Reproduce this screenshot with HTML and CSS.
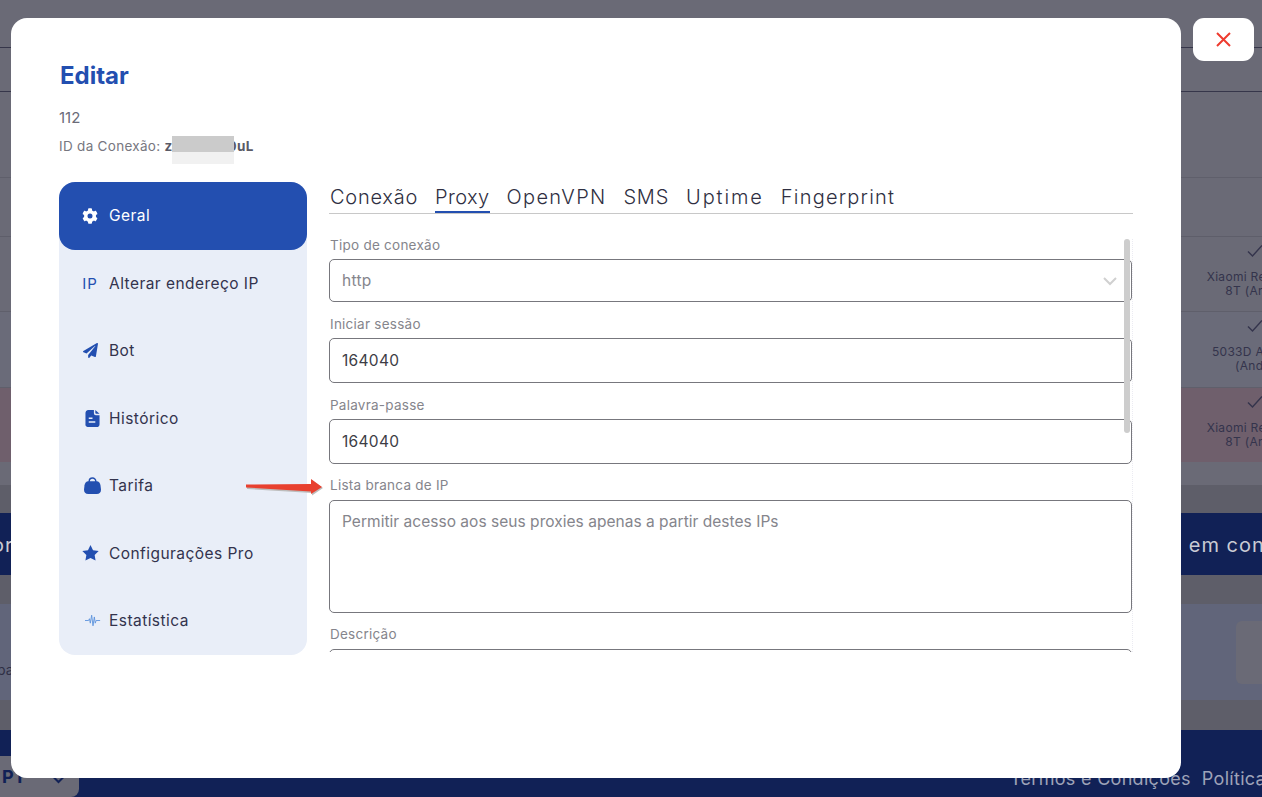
FILE: index.html
```html
<!DOCTYPE html>
<html lang="pt">
<head>
<meta charset="utf-8">
<title>Editar</title>
<link rel="stylesheet" href="styles.css">
</head>
<body>
<div class="page">
  <div class="row r1"></div>
  <div class="row r2"></div>
  <div class="row r3"></div>
  <div class="row r4"></div>
  <div class="row r5"><div class="device"><svg class="tick" viewBox="0 0 16 14"><path d="M1 7.500l4.500 4.500L15 1.500" fill="none" stroke="currentColor" stroke-width="1.400"/></svg><span>Xiaomi Redmi Note<br>8T (Android)</span></div></div>
  <div class="row r6"><div class="device"><svg class="tick" viewBox="0 0 16 14"><path d="M1 7.500l4.500 4.500L15 1.500" fill="none" stroke="currentColor" stroke-width="1.400"/></svg><span>5033D Alcatel 1C<br>(Android)</span></div></div>
  <div class="row r7"><div class="device"><svg class="tick" viewBox="0 0 16 14"><path d="M1 7.500l4.500 4.500L15 1.500" fill="none" stroke="currentColor" stroke-width="1.400"/></svg><span>Xiaomi Redmi Note<br>8T (Android)</span></div></div>
  <div class="row r8"></div>
  <div class="gap g1"></div>
  <div class="banner"><span>or</span><span>em contato</span></div>
  <div class="gap g2"></div>
  <div class="panel"><span>pa</span><div class="panel-card"></div></div>
  <div class="gap g3"></div>
  <div class="footer">
    <div class="lang"><span>PT</span><svg class="lang-chev" viewBox="0 0 12 8"><path d="M1 1l5 5 5-5" fill="none" stroke="currentColor" stroke-width="2"/></svg></div>
    <div class="links"><span>Termos e Condições</span><span>Política</span></div>
  </div>
</div>

<div class="modal">
  <h1 class="title">Editar</h1>
  <p class="num">112</p>
  <p class="conn">ID da Conexão: <b>z<span class="mask"></span>0uL</b></p>
  <div class="body">
    <nav class="side">
      <a class="item active"><span class="ic"><svg viewBox="0 0 512 512" width="16" height="16"><path fill="currentColor" d="M487 316l-42-25a190 190 0 0 0 0-70l42-25c5-3 7-9 5-14-11-35-30-67-54-93-4-4-10-5-15-2l-42 24a187 187 0 0 0-61-35V27c0-6-4-10-9-12-36-8-74-8-108 0-6 2-9 6-9 12v49c-22 8-43 20-61 35L91 87c-5-3-11-2-15 2-24 26-43 58-54 93-2 5 0 11 5 14l42 25a190 190 0 0 0 0 70l-42 25c-5 3-7 9-5 14 11 35 30 67 54 93 4 4 10 5 15 2l42-24c18 15 39 27 61 35v49c0 6 4 10 9 12 36 8 74 8 108 0 6-2 9-6 9-12v-49c22-8 43-20 61-35l42 24c5 3 11 2 15-2 24-26 43-58 54-93 2-5 0-11-5-14zM256 336a80 80 0 1 1 0-160 80 80 0 0 1 0 160z"/></svg></span>Geral</a>
      <a class="item"><span class="ic ip">IP</span>Alterar endereço IP</a>
      <a class="item"><span class="ic"><svg viewBox="0 0 512 512" width="15" height="15"><path fill="currentColor" d="M476 3.200L12.500 270.600c-18.100 10.400-15.800 35.600 2.200 43.200L121 358.400l287.300-253.200c5.500-4.900 13.300 2.600 8.600 8.300L176 407v80.500c0 23.600 28.500 32.900 42.500 15.800L282 426l124.600 52.200c14.200 6 30.400-2.900 33-18.200l72-432C515 7.800 493.300-6.800 476 3.200z"/></svg></span>Bot</a>
      <a class="item"><span class="ic shift"><svg viewBox="0 0 16 18" width="15" height="17"><path fill="currentColor" fill-rule="evenodd" d="M3 0h6.500v3.500A2 2 0 0 0 11.500 5.500H15.500V15a3 3 0 0 1-3 3H3A2.500 2.500 0 0 1 .5 15V3A3 3 0 0 1 3 0zm8 0 4.500 4h-3.500L11 3.500zM4 8v1.500h4V8zm0 4v1.500h7V12z"/></svg></span>Histórico</a>
      <a class="item"><span class="ic shift"><svg viewBox="0 0 18 18" width="17" height="17"><path d="M5.500 7V4.500a3.500 3.500 0 0 1 7 0V7" fill="none" stroke="currentColor" stroke-width="1.500"/><path fill="currentColor" d="M4.500 4.500H13.500C15.500 4.500 17.200 6.500 17.500 9L18 13.500C18 16 16.500 18 13.500 18H4.500C1.500 18 0 16 0 13.500L.5 9C.8 6.500 2.500 4.500 4.500 4.500Z"/></svg></span>Tarifa</a>
      <a class="item"><span class="ic"><svg viewBox="0 0 18 17" width="17" height="16"><path fill="currentColor" d="M9 0l2.700 5.500 6 .9-4.300 4.200 1 6L9 13.700 3.600 16.600l1-6L.3 6.400l6-.9z"/></svg></span>Configurações Pro</a>
      <a class="item"><span class="ic shift-more"><svg viewBox="0 0 18 14" width="16" height="13"><path fill="none" stroke="#5b93dd" stroke-width="1" d="M0 7h4l1-2 1 5 1.500-9 1.500 12 1.500-10 1 7 1-3h4.500"/></svg></span>Estatística</a>
    </nav>
    <section class="content">
      <div class="tabs">
        <span class="tab">Conexão</span>
        <span class="tab on">Proxy</span>
        <span class="tab t-vpn">OpenVPN</span>
        <span class="tab">SMS</span>
        <span class="tab t-up">Uptime</span>
        <span class="tab t-fp">Fingerprint</span>
      </div>
      <div class="form">
        <div class="scrollbar"></div>
        <label class="lab first">Tipo de conexão</label>
        <div class="box h43 muted">http<svg class="chev" viewBox="0 0 14 9"><path d="M1 1l6 6 6-6" fill="none" stroke="currentColor" stroke-width="2"/></svg></div>
        <label class="lab">Iniciar sessão</label>
        <div class="box h45">164040</div>
        <label class="lab">Palavra-passe</label>
        <div class="box h45">164040</div>
        <label class="lab tall">Lista branca de IP</label>
        <div class="box area muted">Permitir acesso aos seus proxies apenas a partir destes IPs</div>
        <label class="lab tall">Descrição</label>
        <div class="box h45"></div>
      </div>
    </section>
  </div>
</div>

<button class="close" aria-label="Fechar"><svg viewBox="0 0 15 15" width="15" height="15"><path d="M1 1l13 13M14 1L1 14" stroke="#ee3b2f" stroke-width="2" fill="none"/></svg></button>

<svg class="arrow" viewBox="0 0 78 20" width="78" height="20"><path d="M1 7 66 6.500V1L77 9 66 16.500V14L1 10z" fill="#bdbdbd"/><path d="M0 5.500 65 5V0L76 8 65 15V12.500L0 8.500z" fill="#e8402f"/></svg>
</body>
</html>
```
FILE: styles.css
```css
* { box-sizing: border-box; }
html, body { margin: 0; height: 100%; overflow: hidden; }
body { font-family: Inter, "Noto Sans", sans-serif; background: #6a6a76; color: #2f2f45; position: relative; }

.page { display: flex; flex-direction: column; height: 797px; overflow: hidden; }
.row { border-bottom: 1px solid #5f5f6b; flex: none; display: flex; justify-content: flex-end; }
.r1 { height: 48px; border-bottom-color: #36364a; }
.r2 { height: 44px; border-bottom-color: #36364a; }
.r3 { height: 86px; }
.r4 { height: 59px; border-bottom-color: #5e5e6a; }
.r5 { height: 75px; }
.r6 { height: 76px; background: #6a6b79; }
.r7 { height: 74px; background: #6f5f6c; border-bottom: 0; }
.r8 { height: 23px; border-bottom: 0; }
.device { width: 124px; margin-right: -63px; text-align: center; font-size: 12px; line-height: 14px; letter-spacing: .3px; color: #34344c; display: flex; flex-direction: column; align-items: center; white-space: nowrap; flex: none; }
.tick { width: 16px; height: 14px; margin-top: 7px; margin-bottom: 12px; margin-right: 16px; flex: none; }
.gap { flex: none; background: #5e5e69; }
.g1 { height: 28px; }
.g2 { height: 29px; }
.g3 { height: 30px; }
.banner { flex: none; height: 62px; padding-top: 2px; background: #112156; color: #c9cbd4; display: flex; justify-content: space-between; align-items: center; font-size: 20px; letter-spacing: 1px; white-space: nowrap; }
.banner span:first-child { margin-left: -8px; }
.banner span:last-child { margin-right: -43px; }
.panel { flex: none; height: 96px; background: #61657a; padding: 17px 0 16px; display: flex; justify-content: space-between; font-size: 14px; color: #2f2f45; }
.panel span { margin-left: -3px; margin-top: 40px; }
.panel-card { width: 60px; margin-right: -34px; background: #6a6a76; border-radius: 6px; }
.footer { flex: 1; background: #112156; display: flex; justify-content: space-between; align-items: flex-end; position: relative; }
.lang { width: 79px; height: 41px; background: #6a6a76; border-bottom-right-radius: 8px; color: #112156; display: flex; align-items: center; gap: 26px; padding-left: 2px; font-weight: 700; font-size: 18px; }
.lang-chev { width: 13px; height: 8px; margin-top: 7px; }
.links { display: flex; gap: 11px; color: #9ea3b8; font-size: 18px; letter-spacing: .3px; margin-right: -4px; margin-bottom: 8px; white-space: nowrap; }

.modal { position: absolute; left: 11px; top: 18px; width: 1170px; height: 760px; background: #fff; border-radius: 16px; padding: 45px 48px 0; }
.title { margin: 0; font-size: 24px; line-height: 26px; font-weight: 700; color: #234fb0; padding-left: 1px; }
.num { margin: 20px 0 0; font-size: 15px; line-height: 18px; color: #6b6b78; }
.conn { margin: 9px 0 0; font-size: 13.500px; line-height: 18px; letter-spacing: .3px; color: #77777f; height: 18px; white-space: nowrap; }
.conn b { color: #5a5a66; }
.mask { display: inline-block; position: relative; width: 62px; height: 16px; background: #cbcbcb; vertical-align: -1px; margin: 0 -6px 0 -1px; }
.mask::after { content: ""; position: absolute; left: 0; right: 0; top: 16px; height: 12px; background: #f1f1f1; }

.body { display: flex; align-items: flex-start; margin-top: 28px; }
.side { width: 248px; height: 473px; background: #e9eef8; border-radius: 16px; flex: none; display: flex; flex-direction: column; }
.item { flex: none; height: 67.500px; padding-bottom: 1px; display: flex; align-items: center; padding-left: 22px; gap: 10px; font-size: 15.500px; color: #33334d; letter-spacing: .45px; }
.item.active { height: 68px; background: #234fb0; color: #fff; border-radius: 16px; }
.ic { width: 18px; height: 18px; display: flex; align-items: center; justify-content: center; color: #234fb0; flex: none; }
.ic svg { flex: none; }
.active .ic { color: #fff; }
.ic.ip { font-size: 15px; letter-spacing: 1px; font-weight: 400; }
.ic.shift { padding-left: 4px; }
.ic.shift-more { padding-left: 6px; }

.content { margin-left: 22px; width: 804px; flex: none; }
.tabs { display: flex; gap: 17px; height: 32px; border-bottom: 1px solid #c8c8c8; padding-left: 1px; font-size: 20px; font-weight: 300; letter-spacing: .75px; line-height: 30px; color: #2f2f42; }
.tab { height: 31px; }
.tab.on { border-bottom: 2px solid #234fb0; letter-spacing: .4px; }
.t-vpn { letter-spacing: 1.300px; }
.t-up { letter-spacing: 1.900px; }
.t-fp { letter-spacing: 1.200px; }
.form { position: relative; height: 413px; margin-top: 25px; overflow: hidden; border-right: 1px dotted #ebebf2; }
.lab { display: block; font-size: 13.500px; line-height: 18px; letter-spacing: .25px; color: #85858c; margin-top: 13px; height: 23px; padding-left: 1px; }
.lab.first { margin-top: -3px; }
.lab.tall { margin-top: 12px; height: 24px; }
.box { border: 1px solid #77777d; border-radius: 5px; padding: 0 12px; display: flex; align-items: center; font-size: 15.500px; color: #3d3d45; letter-spacing: .3px; position: relative; background: #fff; }
.h43 { height: 43px; }
.h45 { height: 45px; }
.area { height: 113px; align-items: flex-start; padding-top: 11px; letter-spacing: .03px; }
.muted { color: #85858c; }
.chev { position: absolute; right: 14px; top: 17px; width: 14px; height: 9px; color: #d0d0d0; }
.scrollbar { position: absolute; right: 2px; top: 0; width: 6px; height: 194px; background: #cdcdcd; border-radius: 3px; z-index: 2; }

.close { position: absolute; left: 1193px; top: 18px; width: 61px; height: 43px; border: 0; border-radius: 11px; background: #fff; display: flex; align-items: center; justify-content: center; padding: 0; }
.arrow { position: absolute; left: 246px; top: 479px; }
```
